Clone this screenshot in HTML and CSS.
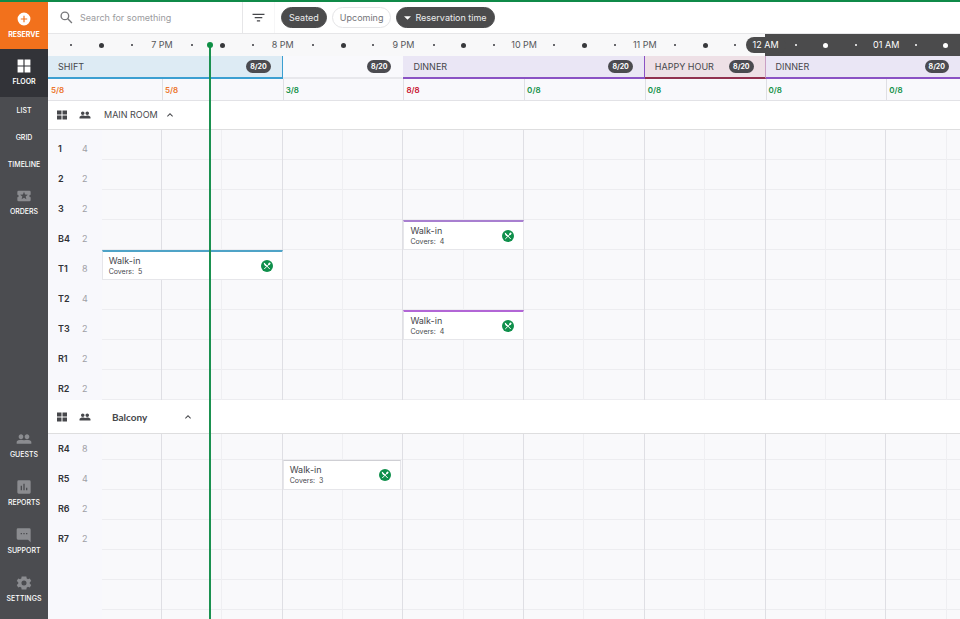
FILE: index.html
```html
<!doctype html>
<html lang="en">
  <head>
    <meta charset="utf-8">
    <title>Floor timeline</title>
    <link rel="stylesheet" href="styles.css">
  </head>
  <body>
    <svg class="sprite" aria-hidden="true">
      <symbol id="people" viewBox="0 0 24 24"><path d="M16.5 13c-1.200 0-3.070.34-4.500 1-1.430-.67-3.300-1-4.500-1C5.330 13 1 14.080 1 16.250V19h22v-2.750c0-2.170-4.330-3.250-6.500-3.250zM7.500 12c1.930 0 3.500-1.570 3.500-3.500S9.430 5 7.500 5 4 6.570 4 8.500 5.570 12 7.500 12zm9 0c1.930 0 3.500-1.570 3.500-3.500S18.430 5 16.500 5 13 6.570 13 8.500s1.570 3.500 3.500 3.500z"/></symbol>
      <symbol id="tables" viewBox="0 0 24 24"><path d="M2 3h9v8H2zM13 3h9v8h-9zM2 13h9v8H2zM13 13h9v8h-9z"/></symbol>
      <symbol id="chevron" viewBox="0 0 24 24"><path d="M12 8l-6 6 1.400 1.400 4.600-4.600 4.600 4.600L18 14z"/></symbol>
      <symbol id="seated" viewBox="0 0 24 24">
        <circle cx="12" cy="12" r="12" fill="#0f8f4b"/>
        <path d="M6.500 6.500L17 17.500M17.500 7L7 17.500" stroke="#fff" stroke-width="2" stroke-linecap="round"/>
        <ellipse cx="16.500" cy="7.800" rx="2" ry="2.800" transform="rotate(40 16.500 7.800)" fill="#fff"/>
        <path d="M5.500 6.500l1.200-1 5 5-2 2.200c-2.500-1.700-3.800-3.800-4.200-6.200z" fill="#fff"/>
      </symbol>
    </svg>

    <div class="app">
      <nav class="sidebar">
        <a class="nav-item reserve" href="#reserve">
          <svg viewBox="0 0 24 24"><path d="M12 1a11 11 0 1 0 0 22 11 11 0 0 0 0-22zm5.500 12h-4.500v4.500h-2V13H6.500v-2H11V6.500h2V11h4.500z"/></svg>
          RESERVE
        </a>
        <a class="nav-item floor" href="#floor">
          <svg viewBox="0 0 24 24"><path d="M1 1h10v10H1zM13 1h10v10H13zM1 13h10v10H1zM13 13h10v10H13z"/></svg>
          FLOOR
        </a>
        <div class="sub-nav">
          <a href="#list">LIST</a>
          <a href="#grid">GRID</a>
          <a href="#timeline">TIMELINE</a>
        </div>
        <a class="nav-item" href="#orders">
          <svg viewBox="0 0 24 24"><path d="M22 10V6a2 2 0 0 0-2-2H4a2 2 0 0 0-2 2v4a2 2 0 0 1 0 4v4a2 2 0 0 0 2 2h16a2 2 0 0 0 2-2v-4a2 2 0 0 1 0-4zm-6.400 6.800L12 14.500l-3.600 2.300 1.100-4.100-3.300-2.700 4.200-.200L12 5.800l1.600 4 4.200.200-3.300 2.700z"/></svg>
          ORDERS
        </a>
        <a class="nav-item bottom" href="#guests">
          <svg viewBox="0 0 24 24"><use href="#people"/></svg>
          GUESTS
        </a>
        <a class="nav-item" href="#reports">
          <svg viewBox="0 0 24 24"><path d="M20 2H4a2 2 0 0 0-2 2v16a2 2 0 0 0 2 2h16a2 2 0 0 0 2-2V4a2 2 0 0 0-2-2zM9 17H7v-7h2zm4 0h-2V7h2zm4 0h-2v-4h2z"/></svg>
          REPORTS
        </a>
        <a class="nav-item" href="#support">
          <svg viewBox="0 0 24 24"><path d="M22 4a2 2 0 0 0-2-2H3a2 2 0 0 0-2 2v13a2 2 0 0 0 2 2h15l4 4zM9 11H7V9h2zm4 0h-2V9h2zm4 0h-2V9h2z"/></svg>
          SUPPORT
        </a>
        <a class="nav-item" href="#settings">
          <svg viewBox="0 0 24 24"><path d="M20.600 13.100a8 8 0 0 0 0-2.200l2.300-1.800-2.200-3.900-2.800 1.100a8 8 0 0 0-1.900-1.100L15.600 2.200h-4.400H8.400L8 5.200a8 8 0 0 0-1.900 1.100L3.300 5.200 1.100 9.100l2.300 1.800a8 8 0 0 0 0 2.200l-2.300 1.800 2.200 3.900 2.800-1.100A8 8 0 0 0 8 18.800l.4 3h7.200l.4-3a8 8 0 0 0 1.900-1.100l2.800 1.100 2.200-3.900zM12 15.800a3.800 3.800 0 1 1 0-7.600 3.800 3.800 0 0 1 0 7.600z"/></svg>
          SETTINGS
        </a>
      </nav>

      <main class="main">
        <header class="toolbar">
          <label class="search">
            <svg viewBox="0 0 24 24"><circle cx="9" cy="9" r="7"/><path d="M14 14l8 8"/></svg>
            <input type="search" placeholder="Search for something" aria-label="Search">
          </label>
          <button class="filter" aria-label="Filter">
            <svg viewBox="0 0 24 24"><path d="M1 5h22v2.500H1zM5 11h14v2.500H5zM9 17h6v2.500H9z"/></svg>
          </button>
          <div class="pills">
            <button class="pill dark">Seated</button>
            <button class="pill">Upcoming</button>
            <label class="pill dark sort">
              <svg viewBox="0 0 8 4"><path d="M0 0h8L4 4z"/></svg>
              <select aria-label="Sort by">
                <option>Reservation time</option>
              </select>
            </label>
          </div>
        </header>

        <div class="timeline">
          <div class="ruler" data-ruler></div>

          <div class="shifts">
            <div class="shift blue"><span>SHIFT</span><b class="badge">8/20</b></div>
            <div class="shift"><span></span><b class="badge">8/20</b></div>
            <div class="shift purple"><span>DINNER</span><b class="badge">8/20</b></div>
            <div class="shift red"><span>HAPPY HOUR</span><b class="badge">8/20</b></div>
            <div class="shift purple late"><span>DINNER</span><b class="badge">8/20</b></div>
          </div>

          <div class="covers">
            <span class="busy">5/8</span>
            <span class="busy">5/8</span>
            <span>3/8</span>
            <span class="full">8/8</span>
            <span>0/8</span>
            <span>0/8</span>
            <span>0/8</span>
            <span>0/8</span>
          </div>

          <section class="room">
            <header class="room-header">
              <svg viewBox="0 0 24 24"><use href="#tables"/></svg>
              <svg viewBox="0 0 24 24"><use href="#people"/></svg>
              <button class="room-toggle">MAIN ROOM <svg viewBox="0 0 24 24"><use href="#chevron"/></svg></button>
            </header>
            <div class="rows" data-room="main"></div>
          </section>

          <section class="room balcony">
            <header class="room-header">
              <svg viewBox="0 0 24 24"><use href="#tables"/></svg>
              <svg viewBox="0 0 24 24"><use href="#people"/></svg>
              <button class="room-toggle">Balcony <svg viewBox="0 0 24 24"><use href="#chevron"/></svg></button>
            </header>
            <div class="rows" data-room="balcony"></div>
          </section>

          <div class="now"></div>
        </div>
      </main>
    </div>
    <script src="timeline.js"></script>
  </body>
</html>
```
FILE: styles.css
```css
* {
  box-sizing: border-box;
}

body {
  margin: 0;
  font-family: Inter, "Liberation Sans", sans-serif;
  font-size: 9px;
  line-height: 14px;
  color: #46474b;
}

button, input, select {
  font: inherit;
  color: inherit;
  background: none;
  border: 0;
  margin: 0;
  padding: 0;
}

svg {
  display: block;
  flex: none;
  fill: currentColor;
}

.sprite {
  position: absolute;
  width: 0;
  height: 0;
}

.app {
  display: flex;
  height: 100vh;
  overflow: hidden;
  border-top: 2px solid #0f8a48;
}

/* sidebar */

.sidebar {
  display: flex;
  flex-direction: column;
  flex: none;
  width: 48px;
  background: #4b4c50;
}

.sidebar a {
  color: #fff;
  font-size: 7px;
  line-height: 10px;
  font-weight: 500;
  text-align: center;
  text-decoration: none;
}

.nav-item {
  display: flex;
  flex-direction: column;
  align-items: center;
  justify-content: center;
  gap: 3px;
  height: 48px;
}

.nav-item svg {
  width: 16px;
  height: 16px;
  color: #8b8c90;
}

.sidebar .reserve {
  height: 47px;
  background: #f2711c;
  font-weight: 700;
}

.sidebar .floor {
  background: #323338;
  font-weight: 600;
}

.reserve svg,
.floor svg {
  width: 14px;
  height: 14px;
  color: #fff;
}

.nav-item.reserve,
.nav-item.floor {
  gap: 4px;
}

.sub-nav {
  display: flex;
  flex-direction: column;
  gap: 17px;
  padding: 9px 0 8px;
}

.nav-item.bottom {
  margin-top: auto;
}

.sidebar .nav-item:last-child {
  margin-bottom: 6px;
}

/* toolbar */

.main {
  display: flex;
  flex-direction: column;
  flex: 1;
  min-width: 0;
}

.toolbar {
  display: flex;
  flex: none;
  height: 32px;
  border-bottom: 1px solid #e6e6e8;
}

.search {
  display: flex;
  align-items: center;
  gap: 7px;
  width: 195px;
  padding-left: 12px;
  border-right: 1px solid #e6e6e8;
}

.search svg {
  width: 13px;
  height: 13px;
  fill: none;
  stroke: #77787b;
  stroke-width: 2.500;
}

.search input {
  flex: 1;
  min-width: 0;
  outline: 0;
}

.search input::placeholder {
  color: #9b9b9e;
}

.filter {
  display: flex;
  align-items: center;
  justify-content: center;
  width: 32px;
  border-right: 1px solid #f6f6f7;
}

.filter svg {
  width: 13px;
  height: 13px;
}

.pills {
  display: flex;
  align-items: center;
  gap: 5px;
  padding-left: 6px;
}

.pill {
  height: 21px;
  padding: 0 7px;
  border: 1px solid #e4e4e6;
  border-radius: 11px;
  color: #747579;
}

.pill.dark {
  color: #ededee;
  background: #4b4b4c;
  border-color: #4b4b4c;
}

.sort {
  display: flex;
  align-items: center;
  gap: 4px;
}

.sort svg {
  width: 7px;
  height: 4px;
  color: #fff;
}

.sort select {
  appearance: none;
}

/* timeline: an hour is 18 units wide, the whole width is 136 units */

.timeline {
  position: relative;
  display: flex;
  flex-direction: column;
  flex: 1;
  min-height: 0;
}

.ruler {
  display: grid;
  grid-template-columns: 5fr repeat(29, minmax(0, 18fr)) 17fr;
  flex: none;
  height: 22px;
  color: #55565a;
  background: linear-gradient(to right, #f8f8f9 78.600%, #4b4b4c 0);
}

.tick {
  display: flex;
  align-items: center;
  justify-content: center;
  white-space: nowrap;
}

.tick:first-child {
  grid-column-start: 2;
}

.tick i {
  flex: none;
  width: 2px;
  height: 2px;
  border-radius: 50%;
  background: #38393c;
}

.tick .half {
  width: 5px;
  height: 5px;
}

.tick.night {
  color: #fff;
}

.tick.night i {
  background: #fff;
}

.midnight span {
  flex: none;
  padding: 1px 7px;
  border-radius: 8px;
  background: #4b4b4c;
}

.shifts,
.covers {
  display: grid;
  grid-template-columns: 17fr repeat(6, 18fr) 11fr;
  flex: none;
  background: #f9f9fc;
}

.shift {
  display: flex;
  align-items: center;
  justify-content: space-between;
  height: 23px;
  padding: 0 11px 0 10px;
  border-bottom: 2px solid #e8e8ec;
  border-right: 1px solid transparent;
}

.shift.blue {
  grid-column: span 2;
  background: #ddebf4;
  border-color: #3b9fd1;
}

.shift.purple {
  grid-column: span 2;
  background: #eae6f5;
  border-color: #8a52c4;
}

.shift.red {
  background: #eee0e6;
  border-bottom-color: #92304f;
  border-right-color: #c9a0c4;
}

.shift.late {
  border-right: 0;
}

.badge {
  padding: 0 4px;
  border-radius: 7px;
  font-size: 7px;
  line-height: 13px;
  color: #fff;
  background: #4b4b50;
}

.covers {
  border-bottom: 1px solid #e2e2e6;
}

.covers span {
  padding: 4px 3px 3px 2px;
  border-left: 1px solid #dfdfe4;
  font-size: 8px;
  font-weight: 600;
  color: #159249;
}

.covers span:first-child {
  border-left-color: transparent;
}

.covers .busy {
  color: #ec762b;
}

.covers .full {
  color: #c8102e;
}

/* rooms */

.room {
  flex: none;
}

.balcony {
  flex: 1;
  min-height: 0;
  overflow: hidden;
}

.room-header {
  display: flex;
  align-items: center;
  gap: 11px;
  height: 29px;
  padding-left: 8px;
  border-bottom: 1px solid #dededf;
  background: #fff;
}

.room-header svg {
  width: 12px;
  height: 12px;
}

.room-toggle {
  display: flex;
  align-items: center;
  gap: 6px;
  padding-left: 2px;
}

.balcony .room-header {
  height: 34px;
}

.balcony .room-toggle {
  gap: 35px;
  padding-left: 10px;
  font-family: Lato, sans-serif;
  font-size: 10px;
  font-weight: 700;
}

.rows {
  position: relative;
  background: #f9f9fb;
}

.row,
.lines {
  display: grid;
  grid-template-columns: 8fr repeat(14, 9fr) 2fr;
}

.row {
  height: 30px;
}

.balcony .row:nth-child(2) {
  height: 26px;
}

.lines {
  position: absolute;
  inset: 0;
}

.lines i {
  border-right: 1px solid #efeff2;
}

.lines .hour {
  border-color: #dfdfe4;
}

.table-name {
  position: relative;
  grid-area: 1 / 1;
  display: flex;
  align-items: flex-end;
  padding: 0 0 4px 10px;
  background: #f8f8fc;
}

.table-name b {
  width: 24px;
  font-weight: 600;
  color: #303135;
}

.table-name span {
  color: #a0a0a6;
}

.lane {
  grid-area: 1 / 2 / 2 / -1;
  border-bottom: 1px solid #ededf0;
}

.booking {
  position: relative;
  grid-row: 1;
  display: flex;
  align-items: center;
  justify-content: space-between;
  padding: 0 9px 0 6px;
  border: 1px solid #e6e6ea;
  border-top: 2px solid #a87fd0;
  background: #fff;
}

.booking.blue {
  border-top-color: #4fa3c7;
}

.booking.magenta {
  border-top-color: #b266d6;
}

.booking.plain {
  margin-right: 2px;
  border-top: 1px solid #cfcfd4;
}

.booking p {
  margin: 0;
  line-height: 12px;
}

.booking small {
  display: block;
  font-size: 7px;
  line-height: 10px;
  white-space: pre;
}

.booking svg {
  width: 12px;
  height: 12px;
}

/* current time marker, runs over all rooms */
.now {
  position: absolute;
  top: 10px;
  bottom: 0;
  left: 17.600%;
  width: 2px;
  background: #1b9150;
}

.now::before {
  content: "";
  position: absolute;
  top: -2px;
  left: -2px;
  width: 6px;
  height: 6px;
  border-radius: 50%;
  background: #0f8f45;
}
```
FILE: timeline.js
```js
(function() {
  var hours = ['7 PM', '8 PM', '9 PM', '10 PM', '11 PM', '12 AM', '01 AM'];

  // start and end are grid lines, one for every half hour
  var rooms = {
    main: [
      { name: '1', seats: 4 },
      { name: '2', seats: 2 },
      { name: '3', seats: 2 },
      { name: 'B4', seats: 2, booking: { start: 7, end: 9, covers: 4, type: 'purple' } },
      { name: 'T1', seats: 8, booking: { start: 2, end: 5, covers: 5, type: 'blue' } },
      { name: 'T2', seats: 4 },
      { name: 'T3', seats: 2, booking: { start: 7, end: 9, covers: 4, type: 'magenta' } },
      { name: 'R1', seats: 2 },
      { name: 'R2', seats: 2 }
    ],
    balcony: [
      { name: 'R4', seats: 8 },
      { name: 'R5', seats: 4, booking: { start: 5, end: 7, covers: 3, type: 'plain' } },
      { name: 'R6', seats: 2 },
      { name: 'R7', seats: 2 },
      { name: '', seats: '' },
      { name: '', seats: '' },
      { name: '', seats: '' }
    ]
  };

  function createRuler () {
    var html = '';
    for (var i = 0; i < 30; i++) {
      var content = '<i></i>';
      var classes = 'tick';
      if (i % 4 === 3) content = '<span>' + hours[(i - 3) / 4] + '</span>';
      if (i % 4 === 1) content = '<i class="half"></i>';
      if (i >= 23) classes += ' night';
      if (i === 23) classes += ' midnight';
      html += '<div class="' + classes + '">' + content + '</div>';
    }
    document.querySelector('*[data-ruler]').innerHTML = html;
  }

  function createRow (table) {
    var html = '<div class="row"><div class="table-name"><b>' + table.name + '</b><span>' + table.seats + '</span></div><div class="lane"></div>';
    var booking = table.booking;
    if (booking) {
      html += '<article class="booking ' + booking.type + '" style="grid-column: ' + booking.start + ' / ' + booking.end + '">' +
        '<p>Walk-in<small>Covers:  ' + booking.covers + '</small></p>' +
        '<svg viewBox="0 0 24 24"><use href="#seated"/></svg></article>';
    }
    return html + '</div>';
  }

  function createRoom (container) {
    var lines = '';
    for (var i = 0; i < 15; i++) {
      lines += i % 2 ? '<i class="hour"></i>' : '<i></i>';
    }
    container.innerHTML = '<div class="lines">' + lines + '</div>' + rooms[container.dataset.room].map(createRow).join('');
  }

  createRuler();
  document.querySelectorAll('*[data-room]').forEach(createRoom);
})();
```
